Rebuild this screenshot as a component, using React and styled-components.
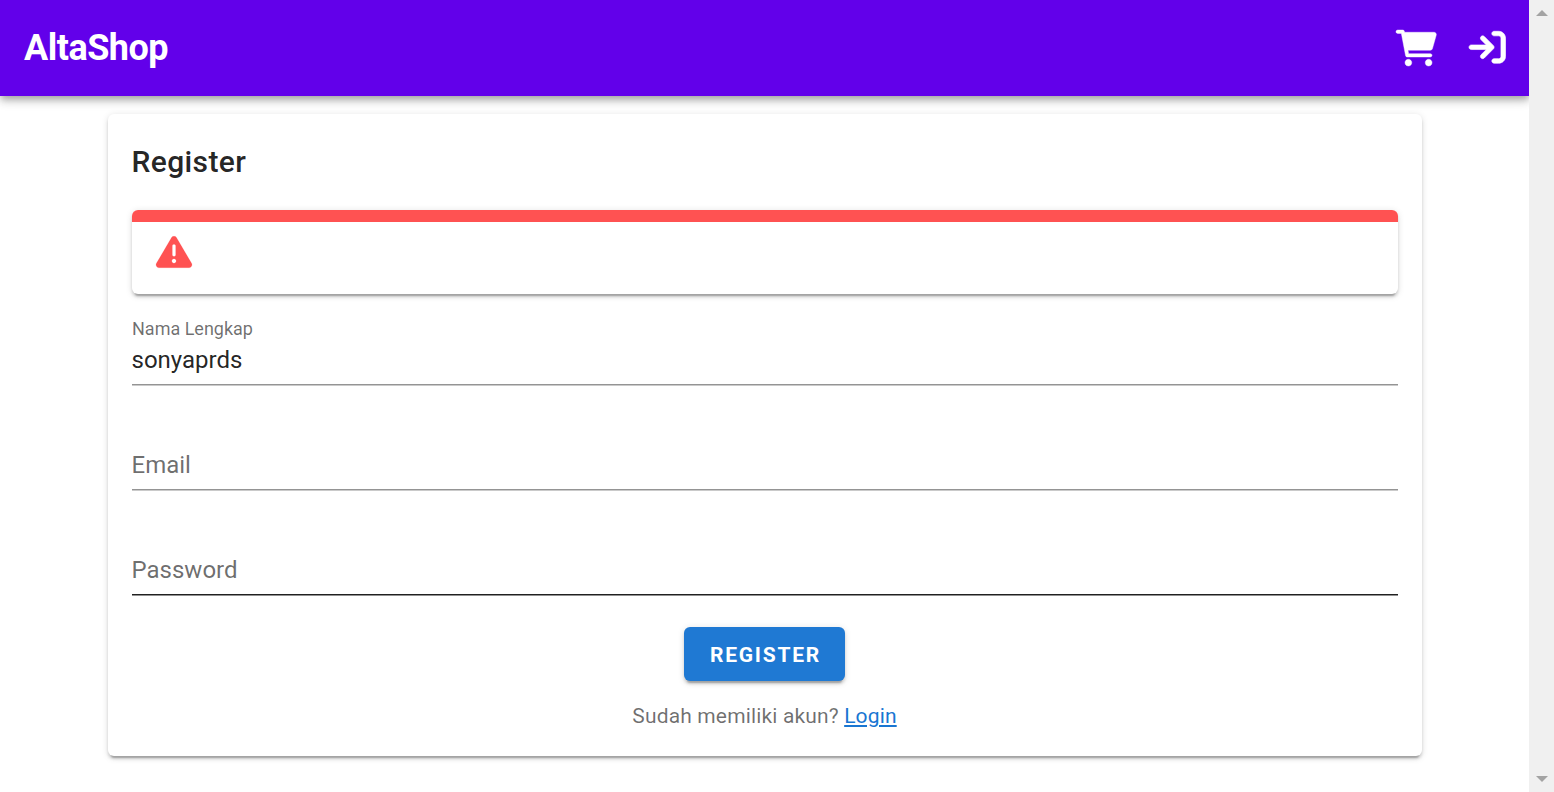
import React from "react";
import styled, { createGlobalStyle } from "styled-components";

const GlobalStyle = createGlobalStyle`
  *, *::before, *::after { box-sizing: border-box; }
  body {
    margin: 0;
    overflow: hidden;
    font-family: Roboto, "Liberation Sans", sans-serif;
    color: rgba(0, 0, 0, 0.87);
    background: #fff;
  }
`;

const Window = styled.div`
  display: flex;
  height: 100vh;
`;

const Page = styled.div`
  flex: 1;
  min-width: 0;
  overflow: hidden;
`;

const AppBar = styled.header`
  display: flex;
  align-items: center;
  justify-content: space-between;
  height: 96px;
  padding: 0 24px;
  background: #6200ea;
  color: #fff;
  box-shadow: 0 3px 6px -1.5px rgba(0, 0, 0, 0.2), 0 6px 7.5px rgba(0, 0, 0, 0.14),
    0 1.5px 15px rgba(0, 0, 0, 0.12);
`;

const Brand = styled.h1`
  margin: 0;
  font-size: 36px;
  line-height: 48px;
  font-weight: 700;
  letter-spacing: -0.5px;
`;

const Actions = styled.nav`
  display: flex;
  align-items: center;
  gap: 32.5px;
  padding-bottom: 1px;
`;

const Icon = styled.svg`
  display: block;
  overflow: visible;
  width: ${(p) => p.$width}px;
  height: ${(p) => p.$height}px;
  fill: currentColor;
  stroke: currentColor;
  stroke-width: ${(p) => p.$stroke || 0};
`;

const Card = styled.main`
  width: 1314px;
  height: 642px;
  margin: 18px auto 0 108px;
  padding: 24px;
  background: #fff;
  border-radius: 6px;
  box-shadow: 0 4.5px 1.5px -3px rgba(0, 0, 0, 0.2), 0 3px 3px rgba(0, 0, 0, 0.14),
    0 1.5px 7.5px rgba(0, 0, 0, 0.12);
`;

const Title = styled.h2`
  margin: 0 0 24px;
  font-size: 30px;
  line-height: 48px;
  font-weight: 500;
  letter-spacing: 0.375px;
  text-indent: -0.5px;
`;

const Alert = styled.div`
  height: 84px;
  padding: 11.5px 23.5px;
  border-top: 12px solid #ff5252;
  border-radius: 6px;
  color: #ff5252;
  box-shadow: 0 4.5px 1.5px -3px rgba(0, 0, 0, 0.2), 0 3px 3px rgba(0, 0, 0, 0.14),
    0 1.5px 7.5px rgba(0, 0, 0, 0.12);
`;

const Fields = styled.div`
  display: flex;
  flex-direction: column;
  gap: 33px;
  padding-top: 19px;
`;

const FieldBox = styled.label`
  display: flex;
  flex-direction: column;
  justify-content: flex-end;
  height: 72px;
  border-bottom: 1px solid ${(p) => (p.$active ? "#212121" : "#949494")};
  box-shadow: 0 1px 0 ${(p) => (p.$active ? "#909090" : "#cacaca")};
`;

const FloatingLabel = styled.span`
  padding-bottom: 1px;
  font-size: 18px;
  line-height: 24px;
  color: rgba(0, 0, 0, 0.57);
`;

const FieldText = styled.span`
  padding-bottom: 6px;
  font-size: 24px;
  line-height: 36px;
  text-indent: -0.5px;
  color: ${(p) => (p.$filled ? "rgba(0, 0, 0, 0.87)" : "rgba(0, 0, 0, 0.58)")};
`;

const Footer = styled.div`
  display: flex;
  flex-direction: column;
  align-items: center;
  gap: 19px;
  padding: 32px 1px 0 0;
`;

const SubmitButton = styled.button`
  width: 161px;
  height: 54px;
  margin-right: 1px;
  padding: 2px 0 0 3px;
  border: 0;
  border-radius: 6px;
  background: #1f79d3;
  color: #fff;
  font: 700 21px/52px Roboto, "Liberation Sans", sans-serif;
  letter-spacing: 1.75px;
  text-transform: uppercase;
  box-shadow: 0 4.5px 1.5px -3px rgba(0, 0, 0, 0.2), 0 3px 3px rgba(0, 0, 0, 0.14),
    0 1.5px 7.5px rgba(0, 0, 0, 0.12);
`;

const Hint = styled.p`
  margin: 0;
  font-size: 21px;
  line-height: 33px;
  letter-spacing: 0.15px;
  color: rgba(0, 0, 0, 0.57);
`;

const LoginLink = styled.a`
  color: #1976d2;
  text-decoration: underline;
`;

const Scrollbar = styled.aside`
  display: flex;
  flex-direction: column;
  align-items: center;
  justify-content: space-between;
  width: 25px;
  padding: 10px 0;
  background: #f0f0f0;
`;

const Arrow = styled.span`
  border: 6px solid transparent;
  border-width: ${(p) => (p.$down ? "6px 6px 0" : "0 6px 6px")};
  border-top-color: ${(p) => (p.$down ? "#a3a3a3" : "transparent")};
  border-bottom-color: ${(p) => (p.$down ? "transparent" : "#a3a3a3")};
`;

const CartIcon = () => (
  <Icon $width={40.5} $height={36} $stroke={6} viewBox="0 0 576 512" aria-hidden="true">
    <path d="M96 0C107.5 0 117.4 8.19 119.6 19.51L121.1 32H541.8C562.1 32 578.3 52.25 572.6 72.66L518.6 264.7C514.7 278.5 502.1 288 487.8 288H170.7L179.9 336H488C501.3 336 512 346.7 512 360C512 373.3 501.3 384 488 384H159.1C148.5 384 138.6 375.8 136.4 364.5L76.14 48H24C10.75 48 0 37.25 0 24C0 10.75 10.75 0 24 0H96zM128 464C128 437.5 149.5 416 176 416C202.5 416 224 437.5 224 464C224 490.5 202.5 512 176 512C149.5 512 128 490.5 128 464zM512 464C512 490.5 490.5 512 464 512C437.5 512 416 490.5 416 464C416 437.5 437.5 416 464 416C490.5 416 512 437.5 512 464z" />
  </Icon>
);

const LoginIcon = () => (
  <Icon $width={36.5} $height={36.5} $stroke={9} viewBox="0 0 512 512" aria-hidden="true">
    <path d="M416 32h-64c-17.67 0-32 14.33-32 32s14.33 32 32 32h64c17.67 0 32 14.33 32 32v256c0 17.67-14.33 32-32 32h-64c-17.67 0-32 14.33-32 32s14.33 32 32 32h64c53.02 0 96-42.98 96-96V128C512 74.98 469 32 416 32zM342.6 233.4l-128-128c-12.51-12.51-32.76-12.49-45.25 0c-12.5 12.5-12.5 32.75 0 45.25L242.8 224H32C14.31 224 0 238.3 0 256s14.31 32 32 32h210.8l-73.38 73.38c-12.5 12.5-12.5 32.75 0 45.25s32.75 12.5 45.25 0l128-128C355.1 266.1 355.1 245.9 342.6 233.4z" />
  </Icon>
);

const WarningIcon = () => (
  <Icon $width={36} $height={36} $stroke={2} viewBox="0 0 512 512" aria-hidden="true">
    <path d="M506.3 417l-213.3-364c-16.33-28-57.54-28-73.98 0l-213.2 364C-10.59 444.9 9.849 480 42.74 480h426.6C502.1 480 522.6 445 506.3 417zM232 168c0-13.25 10.75-24 24-24S280 154.8 280 168v128c0 13.25-10.75 24-23.1 24S232 309.3 232 296V168zM256 416c-17.36 0-31.44-14.08-31.44-31.44c0-17.36 14.07-31.44 31.44-31.44s31.44 14.08 31.44 31.44C287.4 401.9 273.4 416 256 416z" />
  </Icon>
);

function Field({ label, value, active }) {
  return (
    <FieldBox $active={active}>
      {value && <FloatingLabel>{label}</FloatingLabel>}
      <FieldText $filled={Boolean(value)}>{value || label}</FieldText>
    </FieldBox>
  );
}

export default function App() {
  return (
    <Window>
      <GlobalStyle />
      <Page>
        <AppBar>
          <Brand>AltaShop</Brand>
          <Actions>
            <CartIcon />
            <LoginIcon />
          </Actions>
        </AppBar>
        <Card>
          <Title>Register</Title>
          <Alert role="alert">
            <WarningIcon />
          </Alert>
          <Fields>
            <Field label="Nama Lengkap" value="sonyaprds" />
            <Field label="Email" />
            <Field label="Password" active />
          </Fields>
          <Footer>
            <SubmitButton type="button">Register</SubmitButton>
            <Hint>
              Sudah memiliki akun? <LoginLink>Login</LoginLink>
            </Hint>
          </Footer>
        </Card>
      </Page>
      <Scrollbar>
        <Arrow />
        <Arrow $down />
      </Scrollbar>
    </Window>
  );
}
